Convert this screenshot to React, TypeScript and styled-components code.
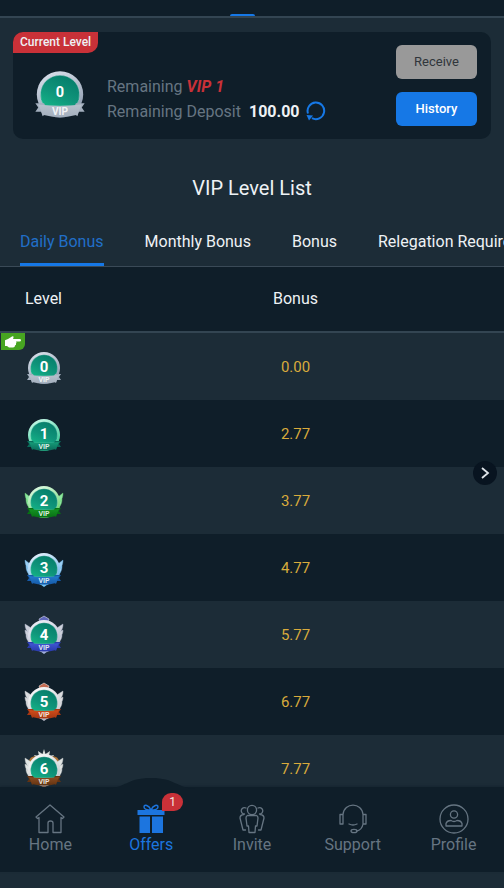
import React from "react";
import styled, { createGlobalStyle } from "styled-components";

const GlobalStyle = createGlobalStyle`
  * { box-sizing: border-box; }
  body { margin: 0; background: #1c2c37; overflow: hidden; }
  button { font-family: inherit; cursor: pointer; }
`;

const color = {
  page: "#1c2c37",
  panel: "#0f1e29",
  line: "#334552",
  blue: "#1678e6",
  red: "#c93138",
  muted: "#667582",
  text: "#eef2f5",
  gold: "#d9ab3c",
};

const Page = styled.div`
  display: flex;
  flex-direction: column;
  height: 100vh;
  background: ${color.page};
  color: ${color.text};
  font-family: Roboto, "Liberation Sans", sans-serif;
  font-size: 16px;
  line-height: 24px;
`;

const TopBar = styled.header`
  display: flex;
  flex: none;
  align-items: flex-end;
  justify-content: center;
  height: 18px;
  background: ${color.panel};
  border-bottom: 2px solid ${color.line};
`;

const TopMarker = styled.span`
  width: 25px;
  height: 2px;
  margin-right: 20px;
  border-radius: 2px 2px 0 0;
  background: ${color.blue};
`;

const Content = styled.main`
  flex: 1;
  min-height: 0;
  overflow: hidden;
`;

const Card = styled.section`
  position: relative;
  display: flex;
  align-items: center;
  gap: 18px;
  height: 107px;
  margin: 14px 13px 0;
  padding: 0 14px 0 18px;
  border-radius: 10px;
  background: ${color.panel};
`;

const CardTag = styled.span`
  position: absolute;
  top: 0;
  left: 0;
  padding: 0 7px;
  border-radius: 10px 0 10px 0;
  background: ${color.red};
  font-size: 12px;
  font-weight: 500;
  line-height: 21px;
`;

const CardBadge = styled.div`
  display: flex;
  margin-top: 14px;
`;

const Progress = styled.div`
  flex: 1;
  margin-top: 26px;
  color: ${color.muted};
  line-height: 25px;
  white-space: nowrap;
  p { margin: 0; display: flex; align-items: center; }
  em { margin-left: 4px; color: ${color.red}; font-weight: 700; }
  strong { margin-left: 8px; color: ${color.text}; font-weight: 700; }
`;

const RefreshButton = styled.button`
  display: flex;
  margin-left: 6px;
  padding: 0;
  border: 0;
  background: none;
  color: ${color.blue};
`;

const Actions = styled.div`
  display: flex;
  flex-direction: column;
  gap: 13px;
  width: 81px;
`;

const ActionButton = styled.button<{ $primary?: boolean }>`
  height: 34px;
  padding: 0 0 2px;
  border: 0;
  border-radius: 6px;
  background: ${(p) => (p.$primary ? color.blue : "#999999")};
  color: ${(p) => (p.$primary ? "#ffffff" : "#30363b")};
  font-size: 13px;
  font-weight: ${(p) => (p.$primary ? 500 : 400)};
`;

const Title = styled.h1`
  margin: 34px 0 0;
  font-size: 20px;
  font-weight: 400;
  line-height: 30px;
  text-align: center;
`;

const Tabs = styled.div`
  display: flex;
  gap: 41px;
  height: 64px;
  padding: 0 20px;
  overflow: hidden;
  border-bottom: 1px solid #3a4a57;
`;

const Tab = styled.button<{ $active?: boolean }>`
  flex: none;
  padding: 18px 0 0;
  border: 0;
  border-bottom: 3px solid ${(p) => (p.$active ? color.blue : "transparent")};
  background: none;
  color: ${(p) => (p.$active ? "#216fc8" : color.text)};
  font-size: 16px;
  line-height: 24px;
  white-space: nowrap;
`;

const Table = styled.table`
  width: 100%;
  border-collapse: separate;
  border-spacing: 0;
  table-layout: fixed;
`;

const HeadCell = styled.th<{ $narrow?: boolean }>`
  width: ${(p) => (p.$narrow ? "87px" : "auto")};
  height: 66px;
  padding: 0;
  border-bottom: 2px solid ${color.line};
  background: ${color.panel};
  font-size: 16px;
  font-weight: 400;
`;

const Row = styled.tr`
  background: ${color.page};
  &:nth-child(even) { background: ${color.panel}; }
`;

const Cell = styled.td`
  position: relative;
  height: 67px;
  padding: 0;
  color: ${color.gold};
  font-size: 15px;
  text-align: center;
  svg { vertical-align: middle; }
`;

const HandTag = styled.span`
  position: absolute;
  top: 0;
  left: 1px;
  display: flex;
  align-items: center;
  justify-content: center;
  width: 24px;
  height: 17px;
  border-radius: 0 0 6px 0;
  background: #47a521;
`;

const NextButton = styled.button`
  position: fixed;
  right: 7px;
  bottom: 403px;
  display: flex;
  align-items: center;
  justify-content: center;
  width: 24px;
  height: 24px;
  padding: 0;
  border: 0;
  border-radius: 50%;
  background: #081420;
  color: #dfe5ea;
`;

const NavBar = styled.nav`
  position: relative;
  display: grid;
  flex: none;
  grid-template-columns: repeat(5, 1fr);
  height: 85px;
  margin-bottom: 16px;
  background: ${color.panel};
  box-shadow: 0 -1px 2px #0f1e2980;
`;

const NavItem = styled.a<{ $active?: boolean }>`
  position: relative;
  display: flex;
  flex-direction: column;
  align-items: center;
  padding-top: 17px;
  color: ${(p) => (p.$active ? "#1c75df" : color.muted)};
  line-height: 22px;
  text-decoration: none;
  svg { position: relative; }
`;

const Bump = styled.span`
  position: absolute;
  top: -10px;
  left: 50%;
  display: flex;
  transform: translateX(-50%);
`;

const Count = styled.span`
  position: absolute;
  top: 6px;
  left: calc(50% + 11px);
  width: 21px;
  border-radius: 9px 9px 9px 0;
  background: ${color.red};
  color: #f3e5e5;
  font-size: 12px;
  line-height: 18px;
  text-align: center;
`;

type Tier = { rim: string; shade: string; ribbon: string; tail: string; wing?: string; feathers?: boolean; crest?: string; tip?: string; star?: boolean; laurel?: string };

const tiers: Tier[] = [
  { rim: "#e0e6f0", shade: "#8f9db0", ribbon: "#b7c1cc", tail: "#a3afbd" },
  { rim: "#d5fff1", shade: "#34c794", ribbon: "#159d79", tail: "#0b6b5a" },
  { rim: "#eafff0", shade: "#69d46d", ribbon: "#159323", tail: "#077014", wing: "#8ce6a0" },
  { rim: "#f2f8ff", shade: "#67b3e9", ribbon: "#237ccc", tail: "#165aa9", wing: "#9ccff3", tip: "#75c6f7" },
  { rim: "#f5f5fb", shade: "#b3b8cf", ribbon: "#4058d4", tail: "#2a3aad", wing: "#ccd0da", feathers: true, crest: "#6068bb", tip: "#a3b0dc" },
  { rim: "#ffffff", shade: "#c7c9cf", ribbon: "#d14e1b", tail: "#a63612", wing: "#d9dadd", feathers: true, crest: "#c46c52", tip: "#b7b9c5" },
  { rim: "#ffffff", shade: "#bfc5c7", ribbon: "#8b4c20", tail: "#633312", wing: "#dfe4e2", feathers: true, tip: "#b58267", star: true, laurel: "#b17638" },
];

function Medal({ level, size = 40, id }: { level: number; size?: number; id: string }) {
  const t = tiers[level];
  const large = size > 40;
  const wing = t.feathers
    ? "M10 20C4 19 1 15 1 9Q5 11 9 15ZM9 24C4 24 1 20 1 15Q5 17 9 20ZM10 28C5 28 2 25 2 20Q6 22 10 24ZM11 31C7 31 4 29 4 25Q8 26 11 28Z"
    : "M9 24C4 23 1 18 1 12Q4 15 9 17ZM9 28C4 27 2 23 2 18Q6 21 10 23ZM11 31C6 31 4 27 4 23Q8 25 11 27Z";
  return (
    <svg width={size} height={size} viewBox="0 0 40 40" overflow="visible" role="img" aria-label={`VIP ${level}`}>
      <defs>
        <linearGradient id={`${id}-rim`} x1="0" y1="0" x2="0.4" y2="1">
          <stop offset="0" stopColor={t.rim} />
          <stop offset="1" stopColor={t.shade} />
        </linearGradient>
        <linearGradient id={`${id}-disc`} x1="0.8" y1="0" x2="0.2" y2="1">
          <stop offset="0" stopColor="#047b69" />
          <stop offset="0.6" stopColor="#0f947a" />
          <stop offset="1" stopColor="#14b085" />
        </linearGradient>
        <linearGradient id={`${id}-ribbon`} x1="0" y1="0" x2="0" y2="1">
          <stop offset="0" stopColor={t.ribbon} />
          <stop offset="1" stopColor={t.tail} />
        </linearGradient>
      </defs>
      {t.star && <path d="M20 0L21.5 5L26 2L25 7L30 6L27 11H13L10 6L15 7L14 2L18.5 5Z" fill="#d7dcd9" />}
      {t.crest && <path d="M20 1L25 4L24 8H16L15 4Z" fill={t.crest} stroke={t.rim} strokeWidth="0.5" />}
      {t.laurel && <path d="M5 13Q5 7 13 7L10 14ZM35 13Q35 7 27 7L30 14Z" fill={t.laurel} />}
      {t.wing && (
        <g fill={t.wing} stroke={t.shade} strokeWidth="0.4">
          <path d={wing} />
          <path d={wing} transform="translate(40 0) scale(-1 1)" />
        </g>
      )}
      {t.tip && <path d="M13 34H27L20 39Z" fill={t.tip} />}
      <circle cx="20" cy="21" r="16" fill={`url(#${id}-rim)`} />
      <path d="M9 29A13.5 13.5 0 1 1 31 29Z" fill={`url(#${id}-disc)`} stroke={t.rim} strokeOpacity="0.5" strokeWidth="0.5" />
      <path d="M9 27L3 27L5 30L3 33L7 33L8 36L12 33ZM31 27L37 27L35 30L37 33L33 33L32 36L28 33Z" fill={t.tail} />
      <path d="M5 28Q20 30 35 28L32 35Q20 38 8 35Z" fill={`url(#${id}-ribbon)`} />
      <text x="20" y="35" fill="#ffffff" fillOpacity="0.85" fontSize="7" fontWeight="700" textAnchor="middle">VIP</text>
      <text x="20" y={large ? 23 : 25} fill="#ffffff" fontSize={large ? 10 : 15} fontWeight="700" textAnchor="middle">{level}</text>
    </svg>
  );
}

function RefreshIcon() {
  return (
    <svg width="20" height="20" viewBox="0 0 20 20" fill="none" stroke="currentColor" strokeWidth="2">
      <path d="M2 12.5A8.3 8.3 0 1 1 6 17.2" />
      <path d="M0.5 14L7 14.5L3 19.5Z" fill="currentColor" stroke="none" />
    </svg>
  );
}

function HandIcon() {
  return (
    <svg width="16" height="12" viewBox="0 0 16 12" fill="#ffffff">
      <path d="M0 4.2L3 3L7 0.4Q9 0 8.5 1.8L8 3H14.5Q16 3 16 4.2Q16 5.5 14.5 5.5H11Q12 6.5 11 7.5Q11.5 9 10 9.5Q10 11.5 8 11.5H4L2 10H0Z" />
    </svg>
  );
}

const lineIcon = { width: 30, height: 30, viewBox: "0 0 30 30", fill: "none", stroke: "currentColor", strokeWidth: 1.3, strokeLinecap: "round", strokeLinejoin: "round" } as const;

const HomeIcon = () => (
  <svg {...lineIcon}>
    <path d="M1 13L15 1L29 13L27.5 14.5L26 13.5V28.5H18V19Q18 17 15.5 17Q13 17 13 19V28.5H4V13.5L2.5 14.5Z" />
  </svg>
);

const GiftIcon = () => (
  <svg width="30" height="30" viewBox="0 0 30 30" fill="currentColor">
    <path d="M1.5 6H28.5V11H1.5ZM3.5 12.5H14V29H3.5ZM16 12.5H27V29H16Z" />
    <path d="M15 6C13 1 8 0 8 3C8 5 11 6 15 6C17 1 22 0 22 3C22 5 19 6 15 6" fill="none" stroke="currentColor" strokeWidth="1.4" />
  </svg>
);

const InviteIcon = () => (
  <svg {...lineIcon}>
    <circle cx="15" cy="6" r="4.6" />
    <path d="M10.5 11.5H19.5Q21 12 21 14L20 22H18.5L18 28.5H12L11.5 22H10L9 14Q9 12 10.5 11.5Z" />
    <path d="M9 4A3.2 3.2 0 1 0 7.5 10M6.8 10.5Q3 11 3 14L4.5 20L6 26H8.5M21 4A3.2 3.2 0 1 1 22.5 10M23.2 10.5Q27 11 27 14L25.5 20L24 26H21.5" />
  </svg>
);

const SupportIcon = () => (
  <svg {...lineIcon}>
    <path d="M5 10.5C6 -2 24 -2 25 10.5M5 10.5H2V20H5ZM25 10.5H28V20H25ZM25 20Q24 26 18.5 27M11 20Q15 22 19 20" />
    <ellipse cx="16" cy="27" rx="3" ry="1.7" />
  </svg>
);

const ProfileIcon = () => (
  <svg {...lineIcon}>
    <circle cx="15" cy="15" r="14" />
    <circle cx="15" cy="10.5" r="3.6" />
    <path d="M7 22V19.5Q8 16.5 12 16.5Q15 18.5 18 16.5Q22 16.5 23 19.5V22Z" />
  </svg>
);

const bonuses = ["0.00", "2.77", "3.77", "4.77", "5.77", "6.77", "7.77"];
const tabs = ["Daily Bonus", "Monthly Bonus", "Bonus", "Relegation Requirements"];
const navItems = [
  { label: "Home", Icon: HomeIcon },
  { label: "Offers", Icon: GiftIcon, count: 1 },
  { label: "Invite", Icon: InviteIcon },
  { label: "Support", Icon: SupportIcon },
  { label: "Profile", Icon: ProfileIcon },
];

export default function App() {
  return (
    <Page>
      <GlobalStyle />
      <TopBar><TopMarker /></TopBar>
      <Content>
        <Card>
          <CardTag>Current Level</CardTag>
          <CardBadge><Medal level={0} size={58} id="current" /></CardBadge>
          <Progress>
            <p>Remaining <em>VIP 1</em></p>
            <p>
              Remaining Deposit <strong>100.00</strong>
              <RefreshButton aria-label="Refresh"><RefreshIcon /></RefreshButton>
            </p>
          </Progress>
          <Actions>
            <ActionButton>Receive</ActionButton>
            <ActionButton $primary>History</ActionButton>
          </Actions>
        </Card>
        <Title>VIP Level List</Title>
        <Tabs role="tablist">
          {tabs.map((tab, i) => (
            <Tab key={tab} role="tab" aria-selected={i === 0} $active={i === 0}>{tab}</Tab>
          ))}
        </Tabs>
        <Table>
          <thead>
            <tr>
              <HeadCell scope="col" $narrow>Level</HeadCell>
              <HeadCell scope="col">Bonus</HeadCell>
            </tr>
          </thead>
          <tbody>
            {bonuses.map((bonus, level) => (
              <Row key={bonus}>
                <Cell>
                  {level === 0 && <HandTag><HandIcon /></HandTag>}
                  <Medal level={level} id={`level-${level}`} />
                </Cell>
                <Cell>{bonus}</Cell>
              </Row>
            ))}
          </tbody>
        </Table>
      </Content>
      <NextButton aria-label="Next">
        <svg width="12" height="12" viewBox="0 0 12 12" fill="none" stroke="currentColor" strokeWidth="1.8">
          <path d="M3 1L9 6L3 11" />
        </svg>
      </NextButton>
      <NavBar>
        {navItems.map(({ label, Icon, count }) => (
          <NavItem key={label} href="#" $active={!!count}>
            {count && (
              <Bump>
                <svg width="90" height="14" viewBox="0 0 90 14">
                  <path d="M0 12C20 11 20 1 45 1C70 1 70 11 90 12V14H0Z" fill={color.panel} />
                </svg>
              </Bump>
            )}
            <Icon />
            {label}
            {count && <Count>{count}</Count>}
          </NavItem>
        ))}
      </NavBar>
    </Page>
  );
}
